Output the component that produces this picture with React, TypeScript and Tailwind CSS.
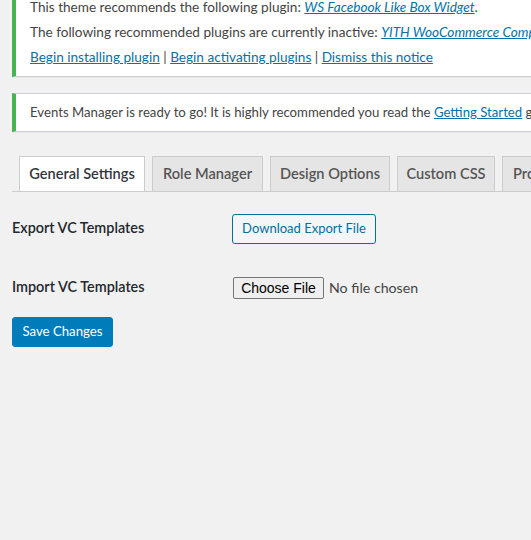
const tabs = [
  { label: 'General Settings', width: 'w-[126px] justify-center', active: true },
  { label: 'Role Manager', width: 'w-[111px] justify-center', active: false },
  { label: 'Design Options', width: 'w-[120px] justify-center', active: false },
  { label: 'Custom CSS', width: 'w-[98px] justify-center', active: false },
  { label: 'Product License', width: 'px-[10px] justify-start', active: false },
]

const Link = ({ children, italic }: { children: React.ReactNode; italic?: boolean }) => (
  <a href="#" className={`text-[#0073aa] underline ${italic ? 'italic' : ''}`}>
    {children}
  </a>
)

const App = () => {
  return (
    <div className="h-[540px] overflow-hidden bg-[#f1f1f1] font-['Lato',sans-serif] text-[13.6px] text-[#444]">
      {/* plugin notices */}
      <div className="ml-3 w-[800px]">
        <div className="-mt-[13px] border border-l-4 border-[#ccd0d4] border-l-[#46b450] bg-white px-[14px] pt-[7px] pb-[6px] shadow-[0_1px_1px_rgba(0,0,0,0.04)]">
          <p className="leading-[25px] whitespace-nowrap">
            This theme recommends the following plugin: <Link italic>WS Facebook Like Box Widget</Link>.
          </p>
          <p className="leading-[25px] whitespace-nowrap">
            The following recommended plugins are currently inactive:{' '}
            <Link italic>YITH WooCommerce Compare</Link>, <Link italic>YITH WooCommerce Wishlist</Link>.
          </p>
          <p className="leading-[25px] whitespace-nowrap">
            <Link>Begin installing plugin</Link> | <Link>Begin activating plugins</Link> |{' '}
            <Link>Dismiss this notice</Link>
          </p>
        </div>

        <div className="mt-4 border border-l-4 border-[#ccd0d4] border-l-[#46b450] bg-white px-[14px] pt-[8px] pb-[9px] shadow-[0_1px_1px_rgba(0,0,0,0.04)]">
          <p className="leading-[20px] whitespace-nowrap text-[13.2px]">
            Events Manager is ready to go! It is highly recommended you read the <Link>Getting Started</Link> guide on
            our site.
          </p>
        </div>
      </div>

      {/* settings tabs */}
      <div className="mt-6 ml-3 flex w-[800px] gap-[7px] border-b border-[#ccc] pl-[7px]">
        {tabs.map((tab) => (
          <div
            key={tab.label}
            className={`${tab.width} -mb-px flex h-[36px] shrink-0 items-center whitespace-nowrap border border-[#ccc] pb-px text-[14.6px] font-semibold ${
              tab.active ? 'bg-white text-[#32373c]' : 'bg-[#e5e5e5] text-[#555]'
            }`}
          >
            {tab.label}
          </div>
        ))}
      </div>

      {/* export / import */}
      <div className="ml-3 mt-[22px]">
        <div className="flex items-center">
          <div className="w-[220px] pb-[3px] text-[14.4px] font-semibold text-[#23282d]">Export VC Templates</div>
          <button className="h-[30px] w-[144px] rounded-[3px] border border-[#0071a1] bg-[#f3f5f6] text-[13px] text-[#0071a1]">
            Download Export File
          </button>
        </div>

        <div className="mt-[33px] flex h-[22px] items-center">
          <div className="w-[221px] pb-[3px] text-[14.4px] font-semibold text-[#23282d]">Import VC Templates</div>
          <div className="flex items-center gap-[5px]">
            <button className="h-[22px] w-[91px] rounded-[2px] border border-[#767676] bg-[#efefef] font-['Liberation_Sans',sans-serif] text-[14px] text-black">
              Choose File
            </button>
            <span className="text-[14.2px] text-[#444]">No file chosen</span>
          </div>
        </div>

        <button className="mt-[18px] h-[30px] w-[101px] rounded-[3px] border border-[#007cba] bg-[#007cba] text-[13.2px] text-white">
          Save Changes
        </button>
      </div>
    </div>
  )
}

export default App
